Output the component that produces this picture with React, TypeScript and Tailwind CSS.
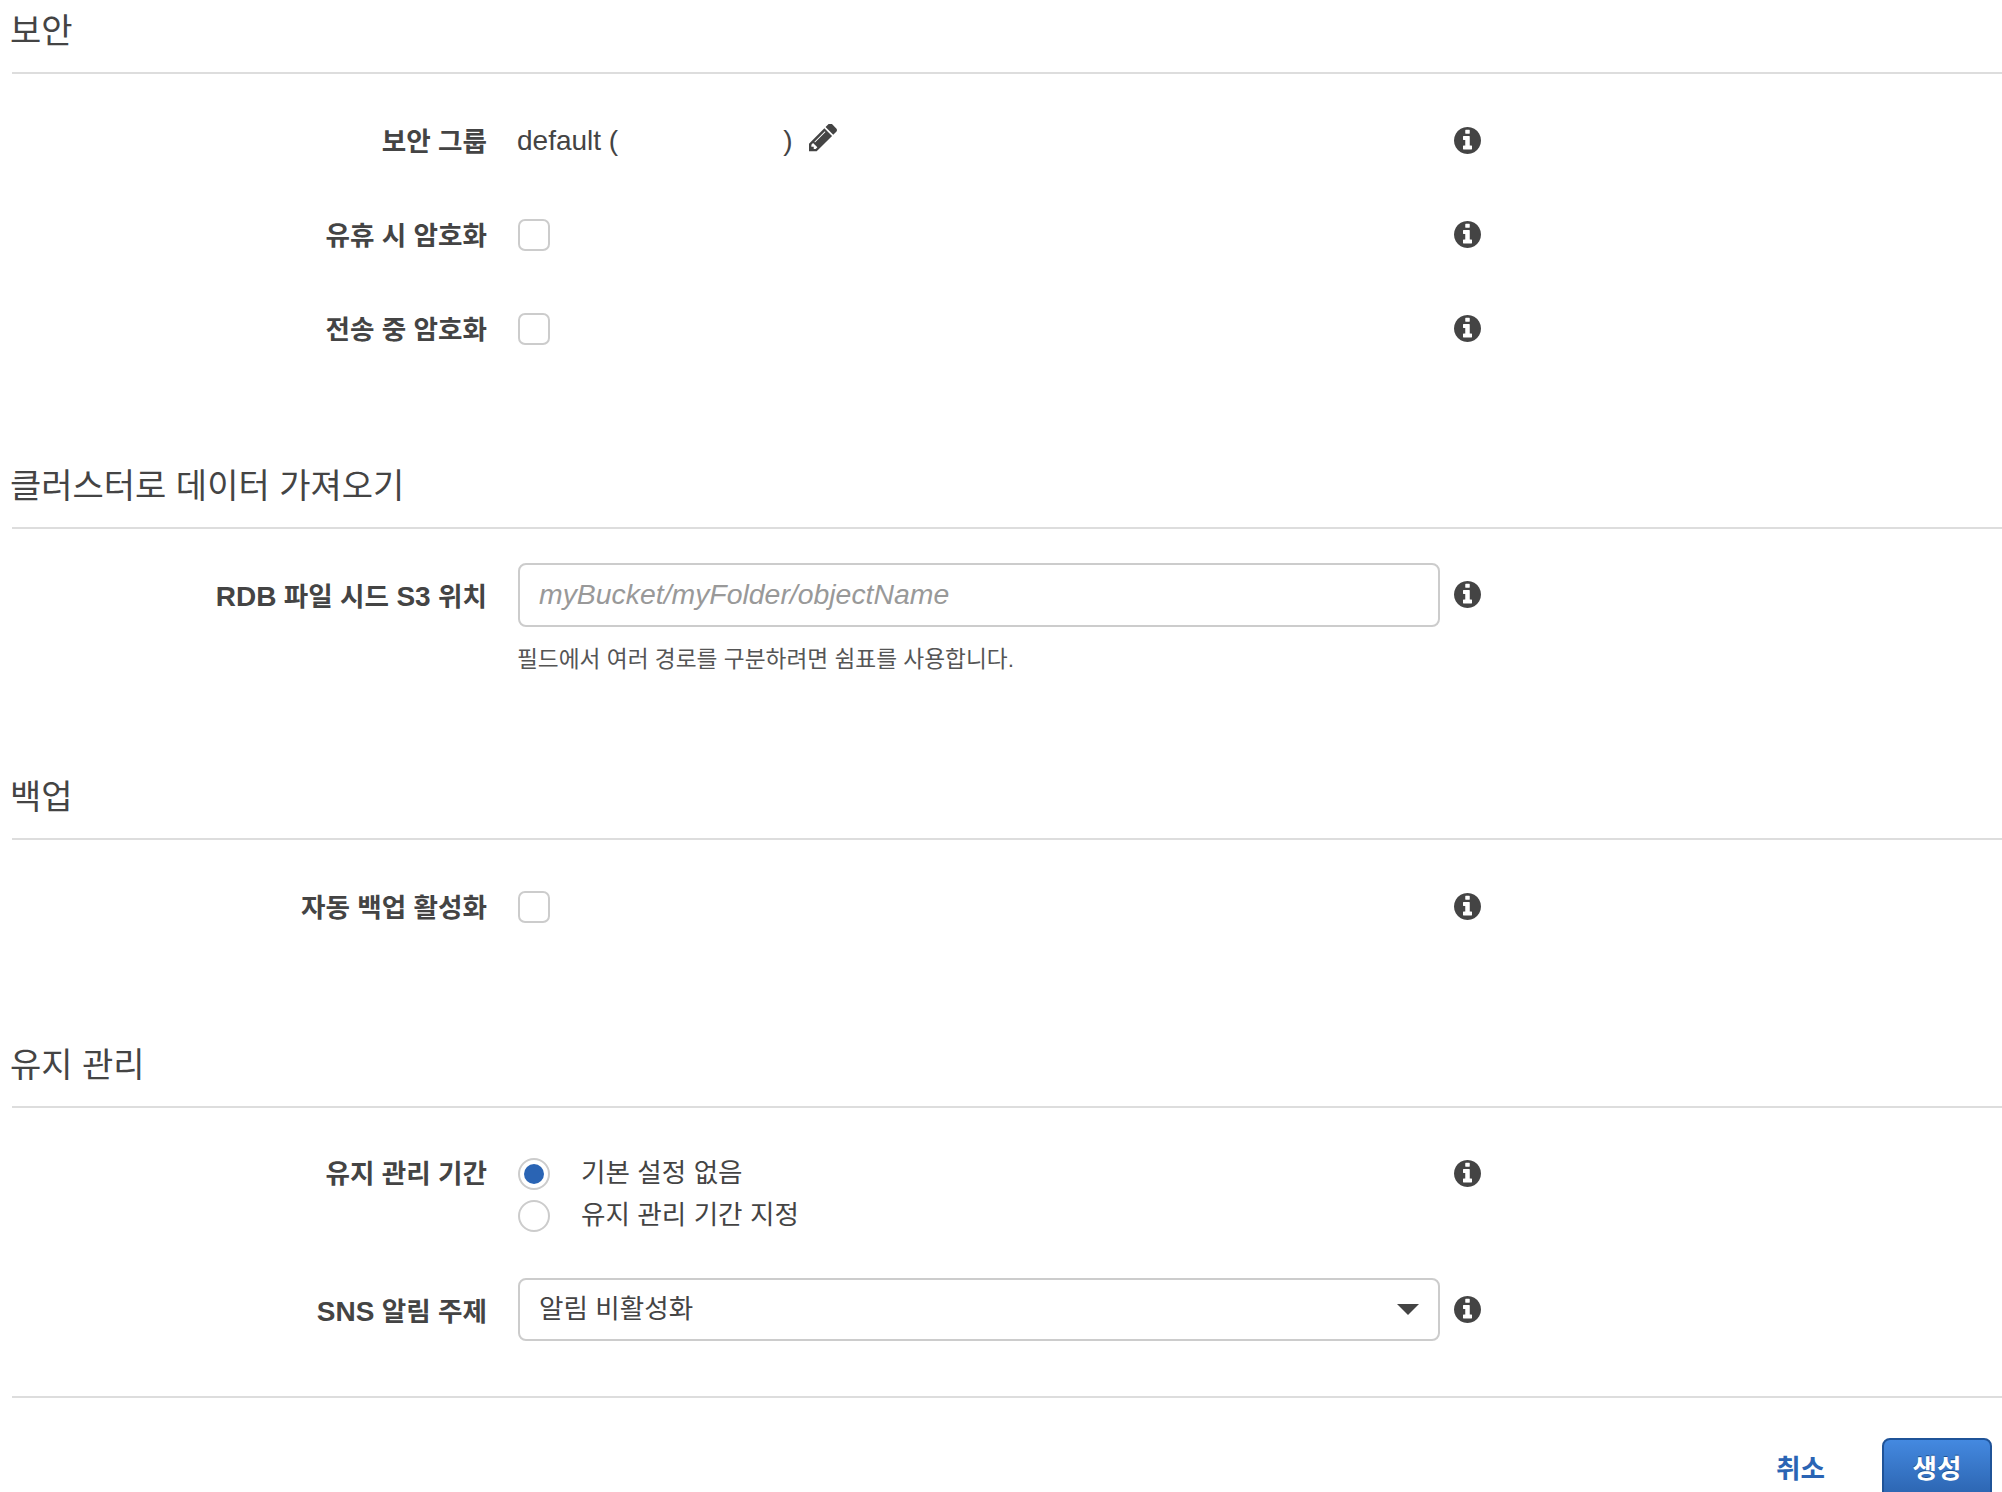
import React from 'react';

const fontStack = "font-['Liberation_Sans','Noto_Sans_CJK_KR',sans-serif]";

const InfoIcon = () => (
  <svg viewBox="128 128 1536 1536" className="w-[27px] h-[27px] shrink-0 fill-[#444]">
    <path
      fillRule="evenodd"
      d="M1152 1376v-160q0-14-9-23t-23-9h-96v-512q0-14-9-23t-23-9h-320q-14 0-23 9t-9 23v160q0 14 9 23t23 9h96v320h-96q-14 0-23 9t-9 23v160q0 14 9 23t23 9h448q14 0 23-9t9-23zm-128-896v-160q0-14-9-23t-23-9h-192q-14 0-23 9t-9 23v160q0 14 9 23t23 9h192q14 0 23-9t9-23zm640 416q0 209-103 385.5t-279.5 279.5-385.5 103-385.5-103-279.5-279.5-103-385.5 103-385.5 279.5-279.5 385.5-103 385.5 103 279.5 279.5 103 385.5z"
    />
  </svg>
);

const PencilIcon = () => (
  <svg viewBox="128 218 1516 1446" className="w-[28px] h-[28px] fill-[#444]">
    <path d="M491 1536l91-91-235-235-91 91v107h128v128h107zm523-928q0-22-22-22-10 0-17 7l-542 542q-7 7-7 17 0 22 22 22 10 0 17-7l542-542q7-7 7-17zm-54-192l416 416-832 832h-416v-416zm683 96q0 53-37 90l-166 166-416-416 166-165q36-38 90-38 53 0 91 38l235 234q37 39 37 91z" />
  </svg>
);

const Checkbox = () => <div className="w-[32px] h-[32px] rounded-[7px] border-2 border-[#ccc] bg-white" />;

const Radio = ({ checked }: { checked?: boolean }) => (
  <div className="w-[32px] h-[32px] rounded-full border-2 border-[#ccc] bg-white flex items-center justify-center">
    {checked && <div className="w-[20px] h-[20px] rounded-full bg-[#2a64b4]" />}
  </div>
);

const Heading = ({ title }: { title: string }) => (
  <div className="h-[74px] ml-[12px] border-b-2 border-[#ddd]">
    <h2 className="-ml-[2px] pt-[9px] text-[34px] leading-[44px] text-[#444] font-normal">{title}</h2>
  </div>
);

const Row = ({ label, children }: { label: React.ReactNode; children: React.ReactNode }) => (
  <div className="flex items-center h-[63px]">
    <label className="w-[487px] shrink-0 pt-[4px] text-right text-[26.6px] font-bold text-[#444]">{label}</label>
    <div className="w-[922px] ml-[31px] shrink-0 flex items-center">{children}</div>
    <div className="ml-[14px]">
      <InfoIcon />
    </div>
  </div>
);

export default function App() {
  return (
    <div className={`${fontStack} h-[1492px] overflow-hidden bg-white text-[#444]`}>
      <Heading title="보안" />
      <div className="pt-[35px] pb-[95px] flex flex-col gap-[31px]">
        <Row label="보안 그룹">
          <span className="text-[28px] -ml-[1px]">default (</span>
          <span className="w-[165px]" />
          <span className="text-[28px]">)</span>
          <span className="ml-[16px] -mt-[5px]">
            <PencilIcon />
          </span>
        </Row>
        <Row label="유휴 시 암호화">
          <Checkbox />
        </Row>
        <Row label="전송 중 암호화">
          <Checkbox />
        </Row>
      </div>

      <Heading title="클러스터로 데이터 가져오기" />
      <div className="pt-[34px] h-[237px]">
        <Row
          label={
            <>
              <span className="text-[28px]">RDB</span> 파일 시드 <span className="text-[28px]">S3</span> 위치
            </>
          }
        >
          <input
            readOnly
            placeholder="myBucket/myFolder/objectName"
            className="w-full h-[64px] px-[19px] rounded-[8px] border-2 border-[#ccc] text-[28.4px] italic placeholder:text-[#999] outline-none"
          />
        </Row>
        <p className="ml-[517px] mt-[17px] text-[22.7px] leading-[32px] text-[#555]">
          필드에서 여러 경로를 구분하려면 쉼표를 사용합니다.
        </p>
      </div>

      <Heading title="백업" />
      <div className="pt-[35px] pb-[96px]">
        <Row label="자동 백업 활성화">
          <Checkbox />
        </Row>
      </div>

      <Heading title="유지 관리" />
      <div className="pt-[50px]">
        <div className="flex items-start h-[74px]">
          <label className="w-[487px] shrink-0 text-right text-[26.6px] leading-[32px] font-bold">유지 관리 기간</label>
          <div className="w-[922px] ml-[31px] shrink-0 flex flex-col gap-[10px]">
            <div className="flex items-center gap-[31px] h-[32px]">
              <Radio checked />
              <span className="text-[26.6px]">기본 설정 없음</span>
            </div>
            <div className="flex items-center gap-[31px] h-[32px]">
              <Radio />
              <span className="text-[26.6px]">유지 관리 기간 지정</span>
            </div>
          </div>
          <div className="ml-[14px] h-[30px] flex items-center">
            <InfoIcon />
          </div>
        </div>
        <div className="mt-[46px]">
          <Row
            label={
              <>
                <span className="text-[28px]">SNS</span> 알림 주제
              </>
            }
          >
            <div className="w-full h-[63px] pl-[19px] pr-[19px] rounded-[8px] border-2 border-[#ccc] flex items-center justify-between">
              <span className="text-[26.6px]">알림 비활성화</span>
              <div className="w-0 h-0 border-x-[11px] border-x-transparent border-t-[11px] border-t-[#444]" />
            </div>
          </Row>
        </div>
      </div>

      <div className="mt-[55px] ml-[12px] border-t-2 border-[#ddd] pt-[40px] pr-[10px] flex items-start justify-end">
        <a className="mt-[12px] text-[26.6px] font-bold text-[#2a64b4]">취소</a>
        <button className="ml-[57px] w-[110px] h-[64px] rounded-[8px] border-2 border-[#1f5398] bg-gradient-to-b from-[#4489e0] to-[#2a62ad] text-white text-[26.6px] font-bold [text-shadow:0_-1px_0_#1d4f8f]">
          생성
        </button>
      </div>
    </div>
  );
}
